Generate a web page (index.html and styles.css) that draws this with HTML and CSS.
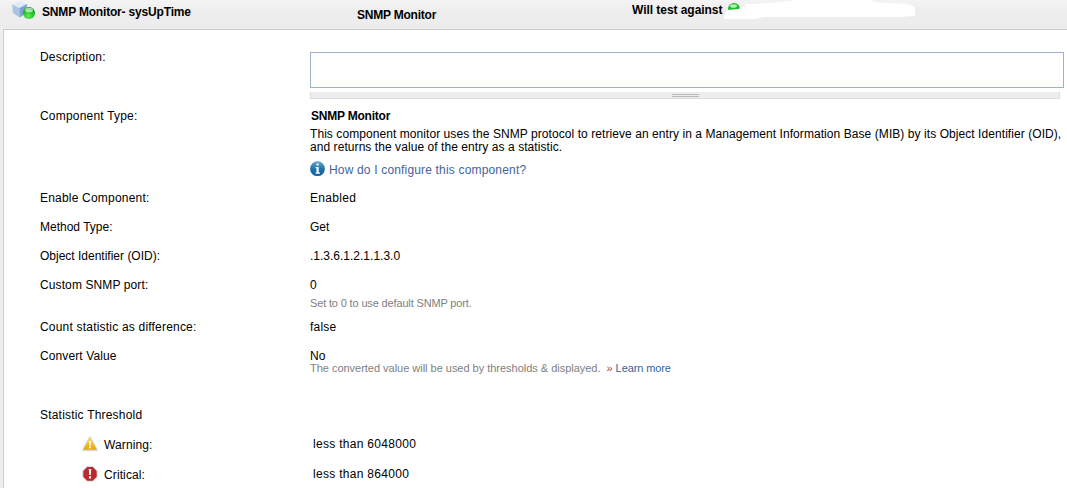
FILE: index.html
```html
<!doctype html>
<html lang="en">
<head>
    <meta charset="UTF-8">
    <title>SNMP Monitor</title>
    <link rel="stylesheet" href="styles.css">
</head>
<body>
<div class="header">
    <div class="header-name">
        <svg class="cube-icon" width="24" height="20" viewBox="0 0 24 20">
            <defs>
                <radialGradient id="ball" cx="45%" cy="75%" r="70%">
                    <stop offset="0" stop-color="#5cf05c"/>
                    <stop offset="0.6" stop-color="#22c422"/>
                    <stop offset="1" stop-color="#129a20"/>
                </radialGradient>
            </defs>
            <path d="M0 4.5 L7 1.5 L15 4 L7.5 8 Z" fill="#dfecf8"/>
            <path d="M0 4.5 L7.5 8 L7.5 17.5 L1 13 Z" fill="#a9c4e4"/>
            <path d="M7.5 8 L15 4 L14 13.5 L7.5 17.5 Z" fill="#7da2d0"/>
            <circle cx="17" cy="13" r="6" fill="url(#ball)"/>
            <ellipse cx="17" cy="10" rx="4" ry="2.3" fill="#fff" opacity="0.6"/>
        </svg>
        <b class="title">SNMP Monitor- sysUpTime</b>
    </div>
    <b class="header-type">SNMP Monitor</b>
    <div class="header-test">
        <b class="test-text">Will test against</b>
        <svg class="node-mask" width="192" height="20" viewBox="0 0 192 20">
            <circle cx="10" cy="9" r="6" fill="#23b82b"/>
            <ellipse cx="9.5" cy="6" rx="3.5" ry="1.8" fill="#b5f0b2"/>
            <path d="M0 16 L3 10 L15 9 L16 7 L21 7 L21 4 L31 4 L45 3 L67 1 L72 0 L147 0 L150 2 L165 3 L184 4 L191 7 L191 16 L176 17 L40 17 L31 19 L0 19 Z" fill="#fff"/>
        </svg>
    </div>
</div>
<div class="panel">
    <div class="row row-description">
        <div class="label wide">Description:</div>
        <div class="value">
            <div class="textarea"></div>
            <div class="grippie"><span></span></div>
        </div>
    </div>
    <div class="row row-type">
        <div class="label wide">Component Type:</div>
        <div class="value">
            <b class="type-name">SNMP Monitor</b>
            <p>This component monitor uses the SNMP protocol to retrieve an entry in a Management Information Base (MIB) by its Object Identifier (OID),<br>and returns the value of the entry as a statistic.</p>
            <div class="help">
                <svg width="16" height="16" viewBox="0 0 16 16">
                    <defs>
                        <linearGradient id="info" x1="0" y1="0" x2="0" y2="1">
                            <stop offset="0" stop-color="#62a9d2"/>
                            <stop offset="0.5" stop-color="#2075ad"/>
                            <stop offset="1" stop-color="#0d5b93"/>
                        </linearGradient>
                    </defs>
                    <circle cx="7.5" cy="7.7" r="7.4" fill="url(#info)"/>
                    <path d="M6.5 2.5h2.2v2H6.5z M5.5 6h3.2v5.5h1.2v1.2H5.5v-1.2h1V7.2h-1z" fill="#fff"/>
                </svg>
                <a>How do I configure this component?</a>
            </div>
        </div>
    </div>
    <div class="row">
        <div class="label wide">Enable Component:</div>
        <div class="value wider">Enabled</div>
    </div>
    <div class="row">
        <div class="label">Method Type:</div>
        <div class="value">Get</div>
    </div>
    <div class="row">
        <div class="label">Object Identifier (OID):</div>
        <div class="value">.1.3.6.1.2.1.1.3.0</div>
    </div>
    <div class="row row-port">
        <div class="label spaced">Custom SNMP port:</div>
        <div class="value">0<div class="hint port-hint">Set to 0 to use default SNMP port.</div></div>
    </div>
    <div class="row">
        <div class="label wide">Count statistic as difference:</div>
        <div class="value wide">false</div>
    </div>
    <div class="row row-convert">
        <div class="label spaced">Convert Value</div>
        <div class="value">No<div class="hint convert-hint"><span>The converted value will be used by thresholds &amp; displayed.</span><i>»</i><a>Learn more</a></div></div>
    </div>
    <div class="row row-heading">
        <div class="label wide">Statistic Threshold</div>
    </div>
    <div class="row row-threshold">
        <div class="label spaced">
            <svg width="16" height="16" viewBox="0 0 16 16">
                <defs>
                    <linearGradient id="warn" x1="0" y1="0" x2="0" y2="1">
                        <stop offset="0" stop-color="#ffdc4a"/>
                        <stop offset="1" stop-color="#eda600"/>
                    </linearGradient>
                </defs>
                <path d="M8 1.5 L14.8 14 H1.2 Z" fill="#d2d2d2" stroke="#d2d2d2" stroke-width="2" stroke-linejoin="round"/>
                <path d="M8 2 L13.8 13 H2.2 Z" fill="url(#warn)" stroke="url(#warn)" stroke-linejoin="round"/>
                <path d="M7 5h2l-.3 4.5H7.3z M7 10.5h2v1.8H7z" fill="#fff"/>
            </svg>
            <span>Warning:</span>
        </div>
        <div class="value wider">less than 6048000</div>
    </div>
    <div class="row row-threshold">
        <div class="label spaced">
            <svg width="16" height="16" viewBox="0 0 16 16">
                <path d="M5 .3h6L15.5 5v6L11 15.5H5L.3 11V5z" fill="#d2cccc"/>
                <path d="M5.3 1h5.4l3.9 4v5.8l-3.9 3.9H5.3l-3.9-3.9V5z" fill="#b9292d"/>
                <path d="M6.8 3h2.4l-.4 6H7.2z M7 10.2h2v2.2H7z" fill="#fff"/>
            </svg>
            <span>Critical:</span>
        </div>
        <div class="value wider">less than 864000</div>
    </div>
</div>
</body>
</html>
```

FILE: styles.css
```css
body {
    margin: 0;
    height: 488px;
    display: flex;
    flex-direction: column;
    overflow: hidden;
    background-color: #eee;
    color: #000;
    font: 12px/14px "Liberation Sans", Arial, sans-serif;
}

.header {
    height: 29px;
    flex: none;
    display: grid;
    grid-template-columns: 357px 275px 1fr;
    background: linear-gradient(#f4f4f4, #ededed 12px);
    white-space: nowrap;
}

.header-name {
    display: flex;
    padding-left: 12px;
}

.cube-icon {
    margin-right: 6px;
}

.title {
    padding-top: 5px;
    letter-spacing: -0.18px;
}

.header-type {
    padding-top: 8px;
    letter-spacing: -0.22px;
}

.header-test {
    display: flex;
}

.test-text {
    width: 92px;
    padding-top: 3px;
    letter-spacing: -0.05px;
}

.panel {
    flex: 1;
    margin-left: 3px;
    padding: 20px 0 0 36px;
    border-top: 1px solid #ccc;
    border-left: 1px solid #ccc;
    background-color: #fff;
}

.row {
    display: grid;
    grid-template-columns: 270px 1fr;
    height: 29px;
    white-space: nowrap;
}

.spaced {
    letter-spacing: 0.11px;
}

.wide {
    letter-spacing: 0.2px;
}

.wider {
    letter-spacing: 0.3px;
}

.row-description {
    height: 59px;
}

.row-type {
    height: 82px;
}

.row-port {
    height: 42px;
}

.row-convert {
    height: 59px;
}

.row-heading,
.row-threshold {
    height: 30px;
}

.row-threshold .label {
    display: flex;
    padding-left: 42px;
}

.row-threshold svg {
    margin: -2px 6px 0 0;
}

.row-threshold .value {
    margin: -1px 0 0 3px;
}

.textarea {
    width: 752px;
    height: 34px;
    margin-top: 2px;
    border: 1px solid #9cafcb;
}

.grippie {
    width: 748px;
    height: 6px;
    margin-top: 4px;
    border: 1px solid #ddd;
    border-top: 0;
    background-color: #eee;
}

.grippie span {
    display: block;
    width: 27px;
    height: 1px;
    margin-left: 361px;
    border: 1px solid #bbb;
    border-width: 1px 0;
    position: relative;
    top: 2px;
}

.type-name {
    display: block;
    margin-left: 1px;
    letter-spacing: -0.22px;
}

p {
    margin: 5px 0 7px;
    line-height: 13px;
    letter-spacing: 0.067px;
}

.help {
    display: flex;
    gap: 3px;
}

.help a {
    padding-top: 2px;
    color: #46629a;
    letter-spacing: 0.17px;
}

.hint {
    font-size: 11px;
    line-height: 13px;
    color: #808080;
}

.port-hint {
    margin-top: 5px;
    letter-spacing: -0.15px;
}

.convert-hint {
    display: flex;
    margin-top: -1px;
    letter-spacing: -0.02px;
}

.convert-hint i {
    margin: 0 3px 0 6px;
    font-style: normal;
    color: #a04848;
}

.convert-hint a {
    color: #336699;
    letter-spacing: -0.1px;
}
```
